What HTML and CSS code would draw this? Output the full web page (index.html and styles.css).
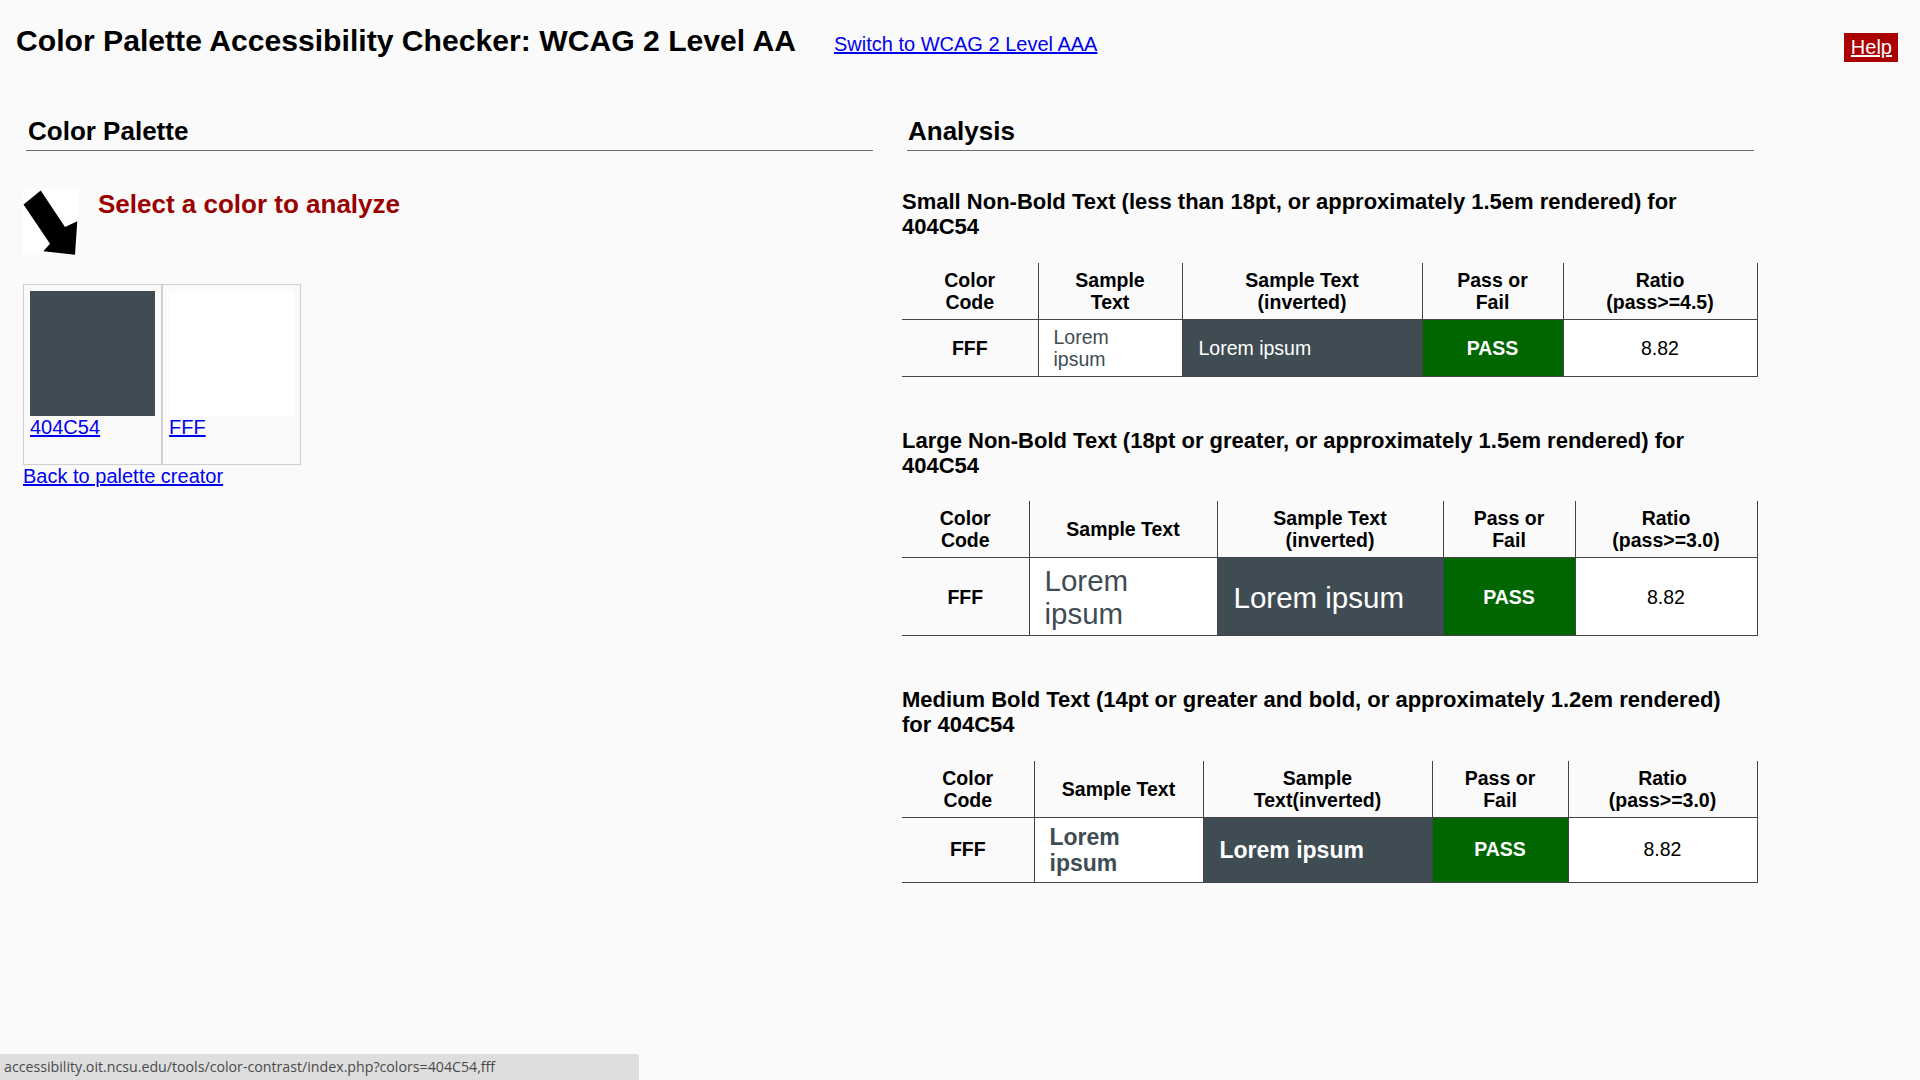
FILE: index.html
```html
<!DOCTYPE html>
<html lang="en">
<head>
<meta charset="utf-8">
<title>Color Palette Accessibility Checker</title>
<link rel="stylesheet" href="styles.css">
</head>
<body>
<header class="top">
  <h1 class="title">Color Palette Accessibility Checker: WCAG 2 Level AA</h1>
  <a class="switch" href="#">Switch to WCAG 2 Level AAA</a>
  <a class="help" href="#">Help</a>
</header>

<main class="main">
  <section class="col col-left">
    <h2 class="sec-title">Color Palette</h2>
    <div class="select-row">
      <div class="arrow-box">
        <svg width="55" height="66" viewBox="0 0 55 66" aria-hidden="true">
          <rect width="55" height="66" fill="#fff"/>
          <polygon points="0.5,15.5 17.7,1.5 42,38 54.3,32.3 52,65.7 20.3,62.3 27,54.7" fill="#000"/>
        </svg>
      </div>
      <h3 class="select-title">Select a color to analyze</h3>
    </div>
    <table class="palette">
      <tr>
        <td class="pcell"><div class="swatch sw-dark"></div><a href="#">404C54</a></td>
        <td class="pcell"><div class="swatch sw-white"></div><a href="#">FFF</a></td>
      </tr>
    </table>
    <a class="back" href="#">Back to palette creator</a>
  </section>

  <section class="col col-right">
    <h2 class="sec-title">Analysis</h2>

    <h3 class="res-title first">Small Non-Bold Text (less than 18pt, or approximately 1.5em rendered) for 404C54</h3>
    <table class="res t1">
      <colgroup><col><col><col><col><col></colgroup>
      <tr>
        <th>Color<br>Code</th>
        <th>Sample<br>Text</th>
        <th>Sample Text<br>(inverted)</th>
        <th>Pass or<br>Fail</th>
        <th>Ratio<br>(pass&gt;=4.5)</th>
      </tr>
      <tr class="row-small">
        <td class="code">FFF</td>
        <td class="sample">Lorem ipsum</td>
        <td class="inverted">Lorem ipsum</td>
        <td class="pass">PASS</td>
        <td class="ratio">8.82</td>
      </tr>
    </table>

    <h3 class="res-title">Large Non-Bold Text (18pt or greater, or approximately 1.5em rendered) for 404C54</h3>
    <table class="res t2">
      <colgroup><col><col><col><col><col></colgroup>
      <tr>
        <th>Color<br>Code</th>
        <th>Sample Text</th>
        <th>Sample Text<br>(inverted)</th>
        <th>Pass or<br>Fail</th>
        <th>Ratio<br>(pass&gt;=3.0)</th>
      </tr>
      <tr class="row-large">
        <td class="code">FFF</td>
        <td class="sample">Lorem ipsum</td>
        <td class="inverted">Lorem ipsum</td>
        <td class="pass">PASS</td>
        <td class="ratio">8.82</td>
      </tr>
    </table>

    <h3 class="res-title">Medium Bold Text (14pt or greater and bold, or approximately 1.2em rendered) for 404C54</h3>
    <table class="res t3">
      <colgroup><col><col><col><col><col></colgroup>
      <tr>
        <th>Color<br>Code</th>
        <th>Sample Text</th>
        <th>Sample<br>Text(inverted)</th>
        <th>Pass or<br>Fail</th>
        <th>Ratio<br>(pass&gt;=3.0)</th>
      </tr>
      <tr class="row-medium">
        <td class="code">FFF</td>
        <td class="sample">Lorem ipsum</td>
        <td class="inverted">Lorem ipsum</td>
        <td class="pass">PASS</td>
        <td class="ratio">8.82</td>
      </tr>
    </table>
  </section>
</main>

<div class="status">accessibility.oit.ncsu.edu/tools/color-contrast/index.php?colors=404C54,fff</div>
</body>
</html>
```

FILE: styles.css
```css
html, body {
  margin: 0;
  padding: 0;
  background: #fafafa;
}
body {
  font-family: "Liberation Sans", Arial, sans-serif;
  color: #000;
  font-size: 19.5px;
}
a { color: #0000ee; }

.top {
  display: flex;
  align-items: baseline;
  padding: 24px 22px 0 16px;
}
.title {
  margin: 0;
  font-size: 30.15px;
  font-weight: bold;
}
.switch {
  margin-left: 38px;
  font-size: 20px;
}
.help {
  margin-left: auto;
  align-self: flex-start;
  margin-top: 9px;
  background: #aa0000;
  color: #fff;
  font-size: 20px;
  line-height: 23px;
  padding: 3px 6px 3px 7px;
}

.main {
  display: flex;
  gap: 24px;
  padding: 54px 0 0 23px;
}
.col { width: 855px; }
.sec-title {
  margin: 0 0 38px 3px;
  width: 845px;
  padding: 0 0 3px 2px;
  font-size: 26px;
  font-weight: bold;
  border-bottom: 1px solid #6a6a6a;
}
.col-right .sec-title { margin-left: 5px; padding-left: 1px; width: 846px; }

.select-row {
  display: flex;
  align-items: flex-start;
  gap: 20px;
}
.arrow-box { width: 55px; height: 66px; }
.arrow-box svg { display: block; }
.select-title {
  margin: 0;
  color: #990000;
  font-size: 26px;
  font-weight: bold;
}

.palette {
  margin-top: 29px;
  border-spacing: 0;
}
.pcell {
  border: 1px solid #cfcfcf;
  padding: 6px 6px 25px 6px;
  vertical-align: top;
  font-size: 20px;
}
.pcell a { display: block; line-height: 23px; }
.swatch { width: 125px; height: 125px; }
.sw-dark { background: #404c54; }
.sw-white { background: #ffffff; }
.back {
  display: inline-block;
  font-size: 20px;
  line-height: 23px;
}

.res-title {
  max-width: 820px;
  margin: 51px 0 23px 0;
  font-size: 22px;
  line-height: 25.3px;
  font-weight: bold;
}
.res-title.first { margin-top: 0; }

.res {
  width: 855px;
  table-layout: fixed;
  border-collapse: collapse;
}
.res th, .res td {
  border-right: 1px solid #444;
  border-bottom: 1px solid #444;
}
.res th {
  font-weight: bold;
  text-align: center;
  line-height: 22px;
  padding: 6px 4px 6px;
}
.res td {
  padding: 6px 15px;
  text-align: center;
}
.res td.sample {
  background: #fff;
  color: #404c54;
  text-align: left;
  padding-right: 22px;
}
.res td.inverted {
  background: #404c54;
  color: #fff;
  text-align: left;
  padding-left: 16px;
}
.res td.code { font-weight: bold; }
.res td.pass {
  background: #006600;
  color: #fff;
  font-weight: bold;
}
.res td.ratio { background: #fff; }

.row-small td { line-height: 22px; }
.row-large td.sample, .row-large td.inverted { font-size: 29.5px; line-height: 33px; }
.row-large td { padding-top: 6px; padding-bottom: 5px; }
.row-medium td.sample, .row-medium td.inverted { font-size: 23px; font-weight: bold; line-height: 26px; }

.t1 col:nth-child(1) { width: 136px; }
.t1 col:nth-child(2) { width: 144px; }
.t1 col:nth-child(3) { width: 240px; }
.t1 col:nth-child(4) { width: 141px; }
.t1 col:nth-child(5) { width: 194px; }
.t2 col:nth-child(1) { width: 127px; }
.t2 col:nth-child(2) { width: 188px; }
.t2 col:nth-child(3) { width: 226px; }
.t2 col:nth-child(4) { width: 132px; }
.t2 col:nth-child(5) { width: 182px; }
.t3 col:nth-child(1) { width: 132px; }
.t3 col:nth-child(2) { width: 169px; }
.t3 col:nth-child(3) { width: 229px; }
.t3 col:nth-child(4) { width: 136px; }
.t3 col:nth-child(5) { width: 189px; }

.status {
  position: fixed;
  left: 0;
  bottom: 0;
  width: 635px;
  height: 26px;
  line-height: 26px;
  padding-left: 4px;
  background: #dedede;
  color: #4a4a4a;
  font-family: "Open Sans", "Noto Sans", sans-serif;
  font-size: 14.2px;
  border-top-right-radius: 3px;
  white-space: nowrap;
}
```
